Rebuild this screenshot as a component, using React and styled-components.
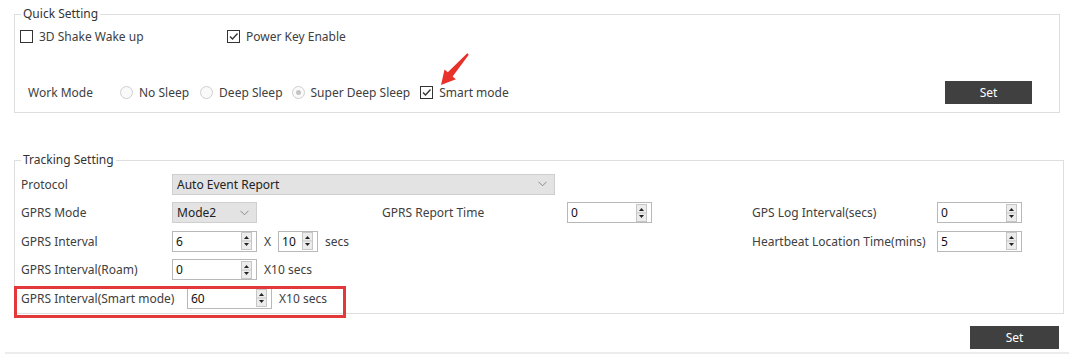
import React from "react";
import styled, { createGlobalStyle } from "styled-components";

const GlobalStyle = createGlobalStyle`
  body {
    margin: 0;
    background: #fff;
    font-family: "Noto Sans", "Liberation Sans", sans-serif;
    font-size: 12px;
    color: #404040;
  }
`;

const Page = styled.div`
  width: 1069px;
  height: 362px;
  overflow: hidden;
  padding-top: 6px;
  box-sizing: border-box;
`;

const Group = styled.fieldset`
  position: relative;
  margin: ${(p) => p.$top || 0}px 0 0 14px;
  width: ${(p) => p.$width}px;
  box-sizing: border-box;
  border: 1px solid #dedede;
  padding: 0 0 ${(p) => p.$bottom || 0}px 0;
  min-width: 0;
`;

const Legend = styled.legend`
  margin-left: 6px;
  padding: 0 2px;
  height: 16px;
  line-height: 16px;
  color: #333;
`;

const QuickRow = styled.div`
  display: flex;
  align-items: center;
  height: ${(p) => p.$h}px;
  margin-top: ${(p) => p.$top || 0}px;
  padding-left: ${(p) => p.$left || 0}px;
  padding-right: ${(p) => p.$right || 0}px;
`;

const Option = styled.label`
  display: flex;
  align-items: center;
  gap: 6px;
  width: ${(p) => (p.$w ? `${p.$w}px` : "auto")};
  margin-right: ${(p) => p.$mr || 0}px;
  white-space: nowrap;
  color: #404040;
`;

const Box = styled.span`
  width: 13px;
  height: 13px;
  box-sizing: border-box;
  border: 1px solid #333;
  background: #fff;
  display: inline-flex;
  align-items: center;
  justify-content: center;
  flex: none;
`;

const Round = styled.span`
  width: 13px;
  height: 13px;
  box-sizing: border-box;
  border: 1px solid #cfcfcf;
  border-radius: 50%;
  background: #fafafa;
  display: inline-flex;
  align-items: center;
  justify-content: center;
  flex: none;

  &::after {
    content: "";
    display: ${(p) => (p.$on ? "block" : "none")};
    width: 5px;
    height: 5px;
    border-radius: 50%;
    background: #c4c4c4;
  }
`;

const FieldLabel = styled.span`
  width: ${(p) => p.$w}px;
  flex: none;
  white-space: nowrap;
`;

const SetButton = styled.button`
  margin-left: auto;
  width: ${(p) => p.$w}px;
  height: 23px;
  border: none;
  background: #404040;
  color: #fff;
  font-family: inherit;
  font-size: 12px;
  padding: 0;
`;

const Arrow = styled.svg`
  position: absolute;
  left: 421px;
  top: 29px;
`;

const Grid = styled.div`
  display: grid;
  grid-template-columns: 151px 210px 185px 185px 185px auto;
  grid-auto-rows: 28.5px;
  align-items: center;
  padding: 2px 0 0 6px;
`;

const Cell = styled.div`
  display: flex;
  align-items: center;
  gap: ${(p) => p.$gap || 0}px;
  grid-column: ${(p) => p.$span || "auto"};
  white-space: nowrap;
`;

const SelectBox = styled.div`
  width: ${(p) => p.$w}px;
  height: 21px;
  box-sizing: border-box;
  border: 1px solid #cfcfcf;
  background: #e3e3e3;
  display: flex;
  align-items: center;
  justify-content: space-between;
  padding: 0 7px 0 4px;
  color: #222;
`;

const SpinBox = styled.div`
  width: ${(p) => p.$w}px;
  height: 21px;
  box-sizing: border-box;
  border: 1px solid #b8b8b8;
  background: #fff;
  display: flex;
  align-items: center;
  padding: 0 4px 0 3px;
  color: #111;
  flex: none;
`;

const SpinValue = styled.span`
  flex: 1;
`;

const SmartRow = styled.div`
  position: relative;
  display: flex;
  align-items: center;
  gap: 7px;
  height: 28px;
  padding-left: 6px;

  &::after {
    content: "";
    position: absolute;
    left: -1px;
    top: 2px;
    width: 332px;
    height: 32px;
    box-sizing: border-box;
    border: 3px solid #e2383a;
  }
`;

const Footer = styled.div`
  display: flex;
  margin: 12px 0 0 5px;
  padding-right: 10px;
  padding-bottom: 3px;
  border-bottom: 2px solid #ececec;
`;

function Check({ on }) {
  return (
    <Box>
      {on && (
        <svg width="11" height="11" viewBox="0 0 11 11">
          <polyline points="2,5.5 4.5,8 9.5,2.5" fill="none" stroke="#333" strokeWidth="1.3" />
        </svg>
      )}
    </Box>
  );
}

function Spinner() {
  return (
    <svg width="11" height="18" viewBox="0 0 11 18">
      <rect x="0.5" y="0.5" width="10" height="17" fill="#ececec" stroke="#c6c6c6" />
      <line x1="1" y1="9" x2="10" y2="9" stroke="#c6c6c6" />
      <polygon points="3,7 8,7 5.5,4" fill="#222" />
      <polygon points="3,11 8,11 5.5,14" fill="#222" />
    </svg>
  );
}

function Spin({ w = 85, value }) {
  return (
    <SpinBox $w={w}>
      <SpinValue>{value}</SpinValue>
      <Spinner />
    </SpinBox>
  );
}

function Select({ w, value }) {
  return (
    <SelectBox $w={w}>
      <span>{value}</span>
      <svg width="9" height="6" viewBox="0 0 9 6">
        <polyline points="0.5,0.8 4.5,4.8 8.5,0.8" fill="none" stroke="#8a8a8a" strokeWidth="1" />
      </svg>
    </SelectBox>
  );
}

export default function App() {
  return (
    <Page>
      <GlobalStyle />
      <Group $width={1046} $bottom={8}>
        <Legend>Quick Setting</Legend>
        <QuickRow $h={14} $top={7} $left={5}>
          <Option $w={207}>
            <Check />
            3D Shake Wake up
          </Option>
          <Option>
            <Check on />
            Power Key Enable
          </Option>
        </QuickRow>
        <QuickRow $h={23} $top={38} $left={13} $right={27}>
          <FieldLabel $w={92}>Work Mode</FieldLabel>
          <Option $mr={11}>
            <Round />
            No Sleep
          </Option>
          <Option $mr={9}>
            <Round />
            Deep Sleep
          </Option>
          <Option $mr={10}>
            <Round $on />
            Super Deep Sleep
          </Option>
          <Option>
            <Check on />
            Smart mode
          </Option>
          <SetButton $w={87}>Set</SetButton>
        </QuickRow>
        <Arrow width="40" height="40" viewBox="0 0 40 40">
          <polygon
            points="5,34 8.53,18.45 11.78,21.29 31.24,2.34 32.76,3.66 16.62,25.51 19.87,28.35"
            fill="#e8312b"
          />
        </Arrow>
      </Group>

      <Group $width={1050} $top={39} $bottom={1}>
        <Legend>Tracking Setting</Legend>
        <Grid>
          <Cell>Protocol</Cell>
          <Cell $span="span 5">
            <Select w={383} value="Auto Event Report" />
          </Cell>

          <Cell>GPRS Mode</Cell>
          <Cell>
            <Select w={85} value="Mode2" />
          </Cell>
          <Cell>GPRS Report Time</Cell>
          <Cell>
            <Spin value="0" />
          </Cell>
          <Cell>GPS Log Interval(secs)</Cell>
          <Cell>
            <Spin value="0" />
          </Cell>

          <Cell>GPRS Interval</Cell>
          <Cell $gap={7} $span="span 3">
            <Spin value="6" />
            X
            <Spin w={40} value="10" />
            secs
          </Cell>
          <Cell>Heartbeat Location Time(mins)</Cell>
          <Cell>
            <Spin value="5" />
          </Cell>

          <Cell>GPRS Interval(Roam)</Cell>
          <Cell $gap={7} $span="span 5">
            <Spin value="0" />
            X10 secs
          </Cell>
        </Grid>
        <SmartRow>
          <FieldLabel $w={159}>GPRS Interval(Smart mode)</FieldLabel>
          <Spin value="60" />
          X10 secs
        </SmartRow>
      </Group>

      <Footer>
        <SetButton $w={89}>Set</SetButton>
      </Footer>
    </Page>
  );
}
